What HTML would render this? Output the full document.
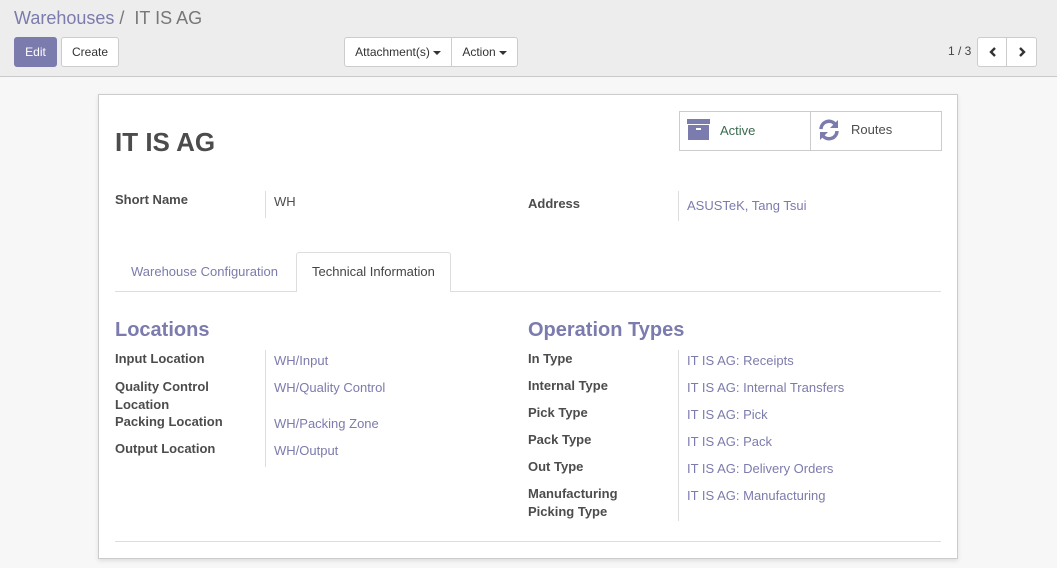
<!DOCTYPE html>
<html><head><style>
*{box-sizing:border-box;margin:0;padding:0}
body{width:1057px;height:568px;font-family:"Liberation Sans",sans-serif;font-size:13px;color:#4c4c4c;background:#f7f7f7;position:relative;overflow:hidden}
.a{position:absolute;white-space:nowrap}
.hdr{position:absolute;left:0;top:0;width:1057px;height:77px;background:#ededed;border-bottom:1px solid #c9c9c9}
.btn{position:absolute;height:30px;border:1px solid #ccc;background:#fff;border-radius:3px;font-size:12px;line-height:28px;text-align:center;color:#333}
.lnk{color:#7c7bad}
.lbl{font-weight:bold;color:#4c4c4c}
.vb{position:absolute;border-left:1px solid #ddd}
.car{display:inline-block;border-left:4px solid transparent;border-right:4px solid transparent;border-top:4px solid #333;vertical-align:middle;margin-left:3px}
</style></head><body>
<div class="hdr"></div>
<div class="a" style="left:14px;top:8px;font-size:18px;color:#7c7bad">Warehouses <span style="color:#777">/&nbsp; IT IS AG</span></div>
<div class="btn" style="left:14px;top:37px;width:43px;background:#7c7bad;border-color:#7c7bad;color:#fff">Edit</div>
<div class="btn" style="left:61px;top:37px;width:58px">Create</div>
<div class="btn" style="left:344px;top:37px;width:108px;border-radius:3px 0 0 3px">Attachment(s)<span class="car"></span></div>
<div class="btn" style="left:451px;top:37px;width:67px;border-radius:0 3px 3px 0">Action<span class="car"></span></div>
<div class="a" style="left:948px;top:44px;font-size:12px;color:#444">1 / 3</div>
<div class="btn" style="left:977px;top:37px;width:30px;border-radius:3px 0 0 3px"><svg width="8" height="10" style="margin-top:9px;display:block;margin-left:11px"><path d="M6 1L2 5l4 4" stroke="#333" stroke-width="2.4" fill="none"/></svg></div>
<div class="btn" style="left:1006px;top:37px;width:31px;border-radius:0 3px 3px 0"><svg width="8" height="10" style="margin-top:9px;display:block;margin-left:11px"><path d="M2 1l4 4-4 4" stroke="#333" stroke-width="2.4" fill="none"/></svg></div>
<div class="a" style="left:98px;top:94px;width:860px;height:465px;background:#fff;border:1px solid #ccc;box-shadow:0 2px 4px rgba(0,0,0,.1)"></div>
<div class="a" style="left:679px;top:111px;width:263px;height:40px;border:1px solid #ccc"></div>
<div class="a" style="left:810px;top:111px;height:40px;border-left:1px solid #ccc"></div>
<svg class="a" style="left:687px;top:119px" width="23" height="22"><rect x="0" y="0" width="23" height="5" fill="#7c7bad"/><rect x="1" y="6" width="21" height="15" fill="#7c7bad"/><rect x="9" y="9" width="5" height="2" fill="#fff"/></svg>
<div class="a" style="left:720px;top:123px;color:#3a6b50">Active</div>
<svg class="a" style="left:818px;top:119px" width="22" height="22" viewBox="0 0 22 22"><path d="M3 10A8 8 0 0 1 17 5" stroke="#7c7bad" stroke-width="3.5" fill="none"/><path d="M20 1v8h-8z" fill="#7c7bad"/><path d="M19 12A8 8 0 0 1 5 17" stroke="#7c7bad" stroke-width="3.5" fill="none"/><path d="M2 21v-8h8z" fill="#7c7bad"/></svg>
<div class="a" style="left:851px;top:122px">Routes</div>
<div class="a" style="left:115px;top:127px;font-size:26px;font-weight:bold;color:#4c4c4c">IT IS AG</div>
<div class="a lbl" style="left:115px;top:192px">Short Name</div>
<div class="vb" style="left:265px;top:191px;height:27px"></div>
<div class="a" style="left:274px;top:194px">WH</div>
<div class="a lbl" style="left:528px;top:196px">Address</div>
<div class="vb" style="left:678px;top:191px;height:30px"></div>
<div class="a lnk" style="left:687px;top:198px">ASUSTeK, Tang Tsui</div>
<div class="a" style="left:115px;top:291px;width:826px;border-top:1px solid #ddd"></div>
<div class="a lnk" style="left:131px;top:264px">Warehouse Configuration</div>
<div class="a" style="left:296px;top:252px;width:155px;height:40px;background:#fff;border:1px solid #ddd;border-bottom:none;border-radius:3px 3px 0 0"></div>
<div class="a" style="left:312px;top:264px;color:#444">Technical Information</div>
<div class="a" style="left:115px;top:319px;font-size:20px;font-weight:bold;color:#7c7bad">Locations</div>
<div class="a" style="left:528px;top:319px;font-size:20px;font-weight:bold;color:#7c7bad">Operation Types</div>
<div class="vb" style="left:265px;top:350px;height:117px"></div>
<div class="a lbl" style="left:115px;top:351px">Input Location</div>
<div class="a lbl" style="left:115px;top:378px;line-height:18px;white-space:normal;width:120px">Quality Control Location</div>
<div class="a lbl" style="left:115px;top:414px">Packing Location</div>
<div class="a lbl" style="left:115px;top:441px">Output Location</div>
<div class="a lnk" style="left:274px;top:353px">WH/Input</div>
<div class="a lnk" style="left:274px;top:380px">WH/Quality Control</div>
<div class="a lnk" style="left:274px;top:416px">WH/Packing Zone</div>
<div class="a lnk" style="left:274px;top:443px">WH/Output</div>
<div class="vb" style="left:678px;top:350px;height:171px"></div>
<div class="a lbl" style="left:528px;top:351px">In Type</div>
<div class="a lbl" style="left:528px;top:378px">Internal Type</div>
<div class="a lbl" style="left:528px;top:405px">Pick Type</div>
<div class="a lbl" style="left:528px;top:432px">Pack Type</div>
<div class="a lbl" style="left:528px;top:459px">Out Type</div>
<div class="a lbl" style="left:528px;top:485px;line-height:18px;white-space:normal;width:120px">Manufacturing Picking Type</div>
<div class="a lnk" style="left:687px;top:353px">IT IS AG: Receipts</div>
<div class="a lnk" style="left:687px;top:380px">IT IS AG: Internal Transfers</div>
<div class="a lnk" style="left:687px;top:407px">IT IS AG: Pick</div>
<div class="a lnk" style="left:687px;top:434px">IT IS AG: Pack</div>
<div class="a lnk" style="left:687px;top:461px">IT IS AG: Delivery Orders</div>
<div class="a lnk" style="left:687px;top:488px">IT IS AG: Manufacturing</div>
<div class="a" style="left:115px;top:541px;width:826px;border-top:1px solid #ddd"></div>
</body></html>
